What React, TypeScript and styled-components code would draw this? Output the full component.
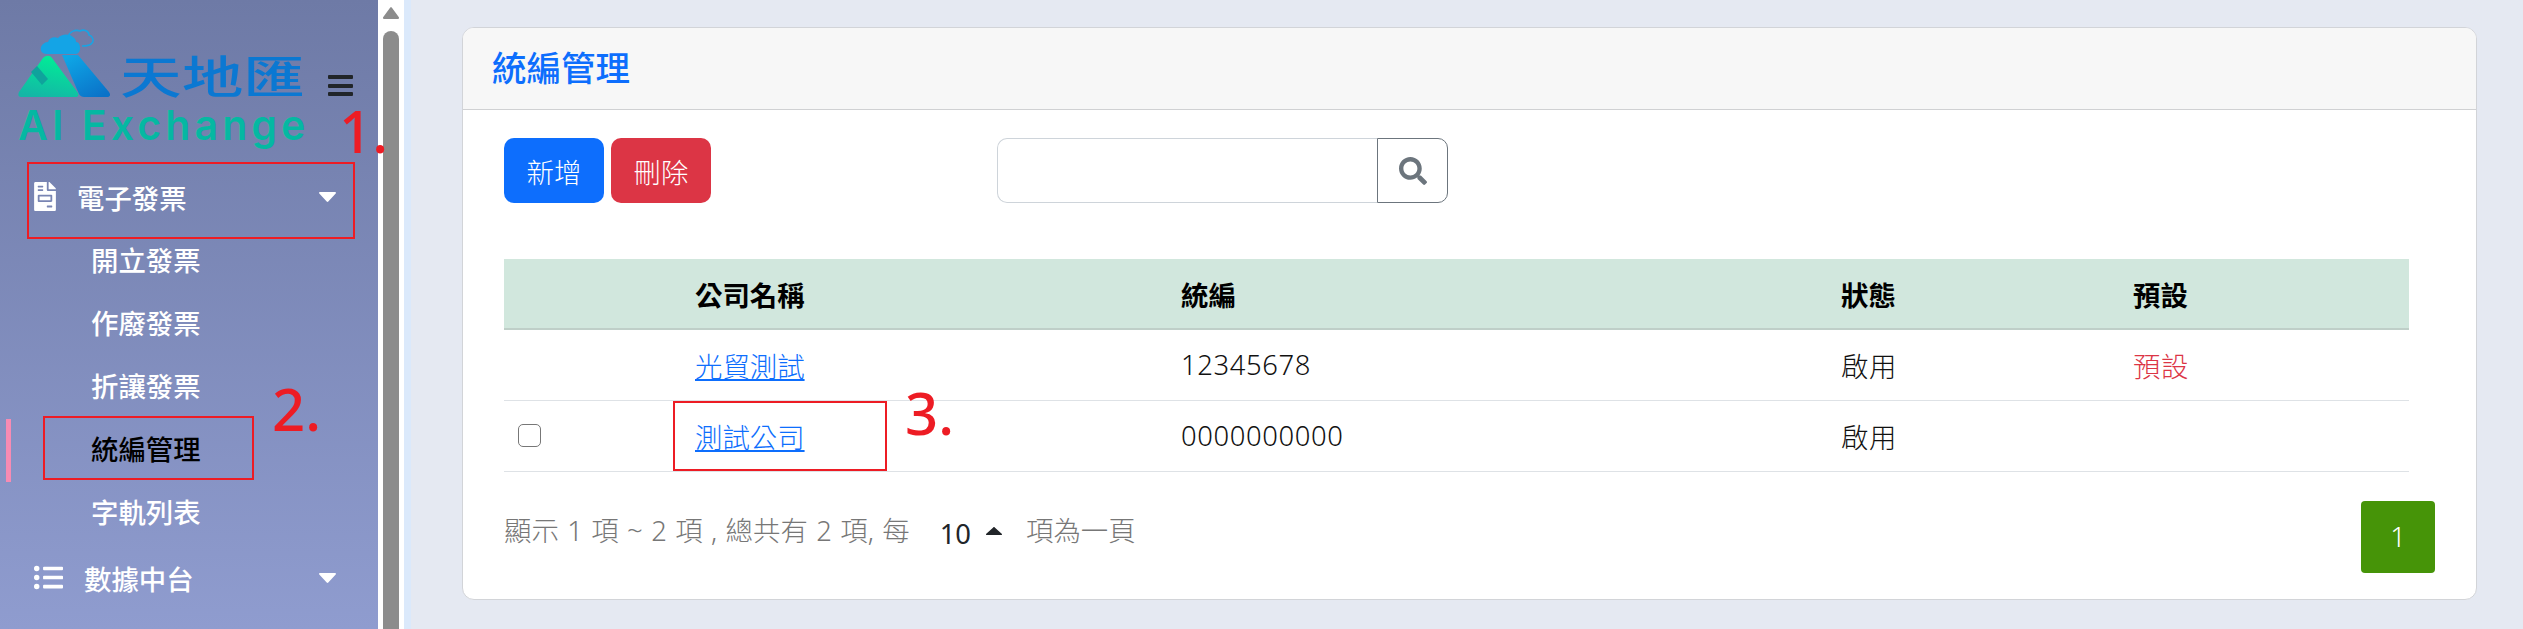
import { createGlobalStyle, styled } from 'styled-components'
import { FaFileInvoice, FaListUl, FaSearch } from 'react-icons/fa'

const GlobalStyle = createGlobalStyle`
  html, body {
    margin: 0;
    padding: 0;
    background: #e5e9f2;
  }
  * {
    box-sizing: border-box;
  }
`

const subItems = ['開立發票', '作廢發票', '折讓發票', '統編管理', '字軌列表']

const App = () => {
  return (
    <Page>
      <GlobalStyle />
      <Sidebar>
        <Brand>
          <BrandTop>
            <LogoMark />
            <BrandName>天地匯</BrandName>
            <Hamburger>
              <span />
              <span />
              <span />
            </Hamburger>
          </BrandTop>
          <BrandSub>AI Exchange</BrandSub>
        </Brand>
        <MenuRow>
          <MenuIcon>
            <FaFileInvoice />
          </MenuIcon>
          <MenuLabel>電子發票</MenuLabel>
          <MenuCaret />
        </MenuRow>
        {subItems.map((item) => (
          <SubItem key={item} $active={item === '統編管理'}>
            {item}
          </SubItem>
        ))}
        <MenuRow $last>
          <MenuIcon $wide>
            <FaListUl />
          </MenuIcon>
          <MenuLabel>數據中台</MenuLabel>
          <MenuCaret />
        </MenuRow>
      </Sidebar>

      <ScrollTrack>
        <ScrollArrow />
        <ScrollThumb />
      </ScrollTrack>
      <Gutter />

      <Main>
        <Card>
          <CardHeader>統編管理</CardHeader>
          <CardBody>
            <Toolbar>
              <ActionButton $color="#0d6efd">新增</ActionButton>
              <ActionButton $color="#dc3545">刪除</ActionButton>
              <SearchGroup>
                <SearchInput />
                <SearchButton>
                  <FaSearch />
                </SearchButton>
              </SearchGroup>
            </Toolbar>

            <Table>
              <colgroup>
                <col width={184} />
                <col width={486} />
                <col width={660} />
                <col width={292} />
                <col width={283} />
              </colgroup>
              <thead>
                <tr>
                  <th />
                  <th>公司名稱</th>
                  <th>統編</th>
                  <th>狀態</th>
                  <th>預設</th>
                </tr>
              </thead>
              <tbody>
                <tr>
                  <td />
                  <td>
                    <CompanyLink href="#">光貿測試</CompanyLink>
                  </td>
                  <td>12345678</td>
                  <td>啟用</td>
                  <DefaultCell>預設</DefaultCell>
                </tr>
                <tr>
                  <td>
                    <RowCheck type="checkbox" />
                  </td>
                  <td>
                    <CompanyLink href="#">測試公司</CompanyLink>
                  </td>
                  <td>0000000000</td>
                  <td>啟用</td>
                  <td />
                </tr>
              </tbody>
            </Table>

            <Footer>
              <FooterInfo>
                <FooterText>顯示 1 項 ~ 2 項 , 總共有 2 項, 每</FooterText>
                <PageSize>
                  10
                  <SizeCaret />
                </PageSize>
                <FooterText>項為一頁</FooterText>
              </FooterInfo>
              <PageButton>1</PageButton>
            </Footer>
          </CardBody>
        </Card>
      </Main>

      <NoteBox $x={27} $y={162} $w={328} $h={77} />
      <NoteBox $x={43} $y={416} $w={211} $h={64} />
      <NoteBox $x={673} $y={401} $w={214} $h={70} />
      <NoteNumber $x={339} $y={95}>
        1.
      </NoteNumber>
      <NoteNumber $x={272} $y={373}>
        2.
      </NoteNumber>
      <NoteNumber $x={905} $y={377}>
        3.
      </NoteNumber>
    </Page>
  )
}

const LogoMark = () => (
  <svg width="92" height="68" viewBox="0 0 92 68">
    <defs>
      <linearGradient id="leftLeg" x1="0.6" y1="0" x2="0.3" y2="1">
        <stop offset="0" stopColor="#00ee96" />
        <stop offset="1" stopColor="#14b6a6" />
      </linearGradient>
      <linearGradient id="rightLeg" x1="0.2" y1="0" x2="0.8" y2="1">
        <stop offset="0" stopColor="#0ea6e6" />
        <stop offset="1" stopColor="#0a72c8" />
      </linearGradient>
    </defs>
    <path
      d="M50 8c1-5 7-8 12-6 4-2 9 0 9 4 4 1 5 6 3 8-2 3-6 3-10 3"
      fill="none"
      stroke="#18a4e4"
      strokeWidth="1.6"
    />
    <path
      d="M29 25c-5 0-7-3-6-7 1-3 4-5 7-5 1-4 6-6 10-4 3-4 11-5 15-1 3 2 3 4 3 5 3 0 4 3 4 6 0 4-2 6-5 6z"
      fill="#14a4e6"
    />
    <path
      d="M25 29c3-3 7-3 9 0L60 64c1 2 0 4-2 4H3c-3 0-3-3-2-5z"
      fill="url(#leftLeg)"
    />
    <path d="M13 43l6-6 11 13-6 6z" fill="#0fa39c" />
    <path
      d="M44 26h16L91 63c2 3 1 5-2 5H66c-2 0-4-1-5-3z"
      fill="url(#rightLeg)"
    />
  </svg>
)

const Caret = ({ className }: { className?: string }) => (
  <svg className={className} viewBox="0 0 17 10" preserveAspectRatio="none">
    <path d="M1 0h15c1 0 1.300 1 .7 1.600L9.300 9.500c-.4.500-1.200.500-1.600 0L.3 1.600C-.3 1 0 0 1 0z" />
  </svg>
)

const Page = styled.div`
  position: relative;
  display: flex;
  width: 2523px;
  height: 629px;
  overflow: hidden;
  font-family: 'Noto Sans', 'Noto Sans CJK TC', sans-serif;
  font-size: 27.4px;
  color: #212529;
`

const Sidebar = styled.aside`
  display: flex;
  flex-direction: column;
  flex: 0 0 378px;
  background: linear-gradient(180deg, #6e7aa6 0%, #8f9ccf 100%);
  color: #fff;
`

const Brand = styled.div`
  height: 167px;
  padding: 29px 0 0 18px;
`

const BrandTop = styled.div`
  display: flex;
  align-items: flex-end;
  height: 68px;
`

const BrandName = styled.div`
  flex: 0 0 208px;
  margin-left: 10px;
  font-size: 45px;
  line-height: 40px;
  font-weight: 500;
  color: #0b78d2;
  transform: scaleX(1.37);
  transform-origin: left center;
`

const Hamburger = styled.div`
  display: flex;
  flex-direction: column;
  gap: 4.500px;
  width: 25px;
  margin-bottom: 1px;

  span {
    height: 4px;
    background: #212529;
    border-radius: 1px;
  }
`

const BrandSub = styled.div`
  margin-top: 5px;
  font-family: Inter, sans-serif;
  font-size: 41px;
  line-height: 46px;
  font-weight: 600;
  letter-spacing: 4.100px;
  color: #05b8a2;
`

const MenuRow = styled.div<{ $last?: boolean }>`
  display: flex;
  align-items: center;
  height: 63px;
  margin-top: ${(p) => (p.$last ? '3px' : '0')};
  padding: 0 42px 4px 34px;
  font-weight: 500;
`

const MenuCaret = styled(Caret)`
  width: 17px;
  height: 10px;
  margin-left: auto;
  fill: #fff;
`

const MenuIcon = styled.span<{ $wide?: boolean }>`
  display: flex;
  flex: 0 0 ${(p) => (p.$wide ? '50px' : '43px')};

  svg {
    width: ${(p) => (p.$wide ? '29px' : '22px')};
    height: 29px;
  }
`

const MenuLabel = styled.span`
  white-space: nowrap;
`

const SubItem = styled.div<{ $active?: boolean }>`
  height: 63px;
  line-height: 61px;
  padding-left: ${(p) => (p.$active ? '80px' : '91px')};
  font-weight: 500;
  color: ${(p) => (p.$active ? '#000' : '#fff')};
  margin-left: ${(p) => (p.$active ? '6px' : '0')};
  border-left: ${(p) => (p.$active ? '5px solid #f78bb3' : '0')};
`

const ScrollTrack = styled.div`
  display: flex;
  flex-direction: column;
  align-items: center;
  flex: 0 0 26px;
  background: #fff;
`

const ScrollArrow = styled(Caret)`
  flex: none;
  width: 16px;
  height: 12px;
  margin: 7px 0 12px;
  fill: #8c8c8c;
  transform: rotate(180deg);
`

const ScrollThumb = styled.div`
  flex: 1;
  width: 16px;
  background: #8c8c8c;
  border-radius: 8px 8px 0 0;
`

const Gutter = styled.div`
  flex: 0 0 7px;
  background: #dbe9fb;
`

const Main = styled.main`
  flex: 1;
  padding: 27px 46px 29px 51px;
  background: #e5e9f2;
`

const Card = styled.section`
  display: flex;
  flex-direction: column;
  height: 573px;
  background: #fff;
  border: 1px solid #d2d4d8;
  border-radius: 12px;
  overflow: hidden;
`

const CardHeader = styled.header`
  height: 82px;
  padding-left: 29px;
  background: #f7f7f7;
  border-bottom: 1.500px solid #d0d1d3;
  font-size: 34.500px;
  font-weight: 500;
  line-height: 80px;
  color: #0d6efd;
`

const CardBody = styled.div`
  padding: 28px 67px 0 41px;
`

const Toolbar = styled.div`
  display: flex;
  gap: 7px;
  height: 65px;
`

const ActionButton = styled.button<{ $color: string }>`
  width: 100px;
  padding: 0;
  border: 0;
  border-radius: 10px;
  background: ${(p) => p.$color};
  color: #fff;
  font: inherit;
  font-weight: 300;
`

const SearchGroup = styled.div`
  display: flex;
  margin-left: 279px;
`

const SearchInput = styled.input`
  width: 380px;
  border: 1px solid #ced4da;
  border-right: 0;
  border-radius: 10px 0 0 10px;
  background: #fff;
  outline: none;
`

const SearchButton = styled.button`
  display: flex;
  align-items: center;
  justify-content: center;
  width: 71px;
  padding: 0;
  background: #fff;
  border: 1px solid #6c757d;
  border-radius: 0 10px 10px 0;
  color: #6c757d;

  svg {
    width: 28px;
    height: 28px;
  }
`

const Table = styled.table`
  width: 1905px;
  margin-top: 56px;
  border-collapse: collapse;
  table-layout: fixed;

  th {
    height: 70px;
    padding: 0 0 0 7px;
    background: #d1e7dd;
    border-bottom: 2px solid #bfcfc8;
    text-align: left;
    font-weight: 700;
    color: #000;
  }

  td {
    height: 71px;
    padding: 0 0 0 7px;
    border-bottom: 1.500px solid #dee2e6;
    letter-spacing: 0.600px;
    font-weight: 300;
    color: #111;
  }
`

const CompanyLink = styled.a`
  color: #0d6efd;
  letter-spacing: 0;
`

const DefaultCell = styled.td`
  && {
    color: #dc3545;
  }
`

const RowCheck = styled.input`
  display: block;
  width: 23px;
  height: 23px;
  margin: 0 0 0 7px;
  appearance: none;
  background: #fff;
  border: 1.500px solid #777;
  border-radius: 5px;
`

const Footer = styled.div`
  display: flex;
  align-items: center;
  height: 72px;
  margin-top: 29px;
  color: #777;
`

const FooterInfo = styled.div`
  display: flex;
  align-items: center;
  margin-bottom: 16px;
  font-weight: 300;
`

const FooterText = styled.span`
  white-space: nowrap;
  word-spacing: 1.300px;
`

const PageSize = styled.span`
  display: flex;
  align-items: center;
  margin: 9px 24px 0 30px;
  color: #212529;
  font-weight: 400;
`

const SizeCaret = styled(Caret)`
  width: 16px;
  height: 8px;
  margin: -5px 0 0 15px;
  fill: #212529;
  transform: rotate(180deg);
`

const PageButton = styled.button`
  width: 74px;
  height: 72px;
  margin-left: auto;
  margin-right: -26px;
  padding: 0;
  border: 0;
  border-radius: 4px;
  background: #469408;
  color: #fff;
  font: inherit;
  font-weight: 300;
`

const NoteBox = styled.div<{ $x: number; $y: number; $w: number; $h: number }>`
  position: absolute;
  left: ${(p) => p.$x}px;
  top: ${(p) => p.$y}px;
  width: ${(p) => p.$w}px;
  height: ${(p) => p.$h}px;
  border: 2px solid #ed1c24;
`

const NoteNumber = styled.div<{ $x: number; $y: number }>`
  position: absolute;
  left: ${(p) => p.$x}px;
  top: ${(p) => p.$y}px;
  font-size: 58px;
  line-height: 72px;
  font-weight: 500;
  color: #ed1c24;
`

export default App
